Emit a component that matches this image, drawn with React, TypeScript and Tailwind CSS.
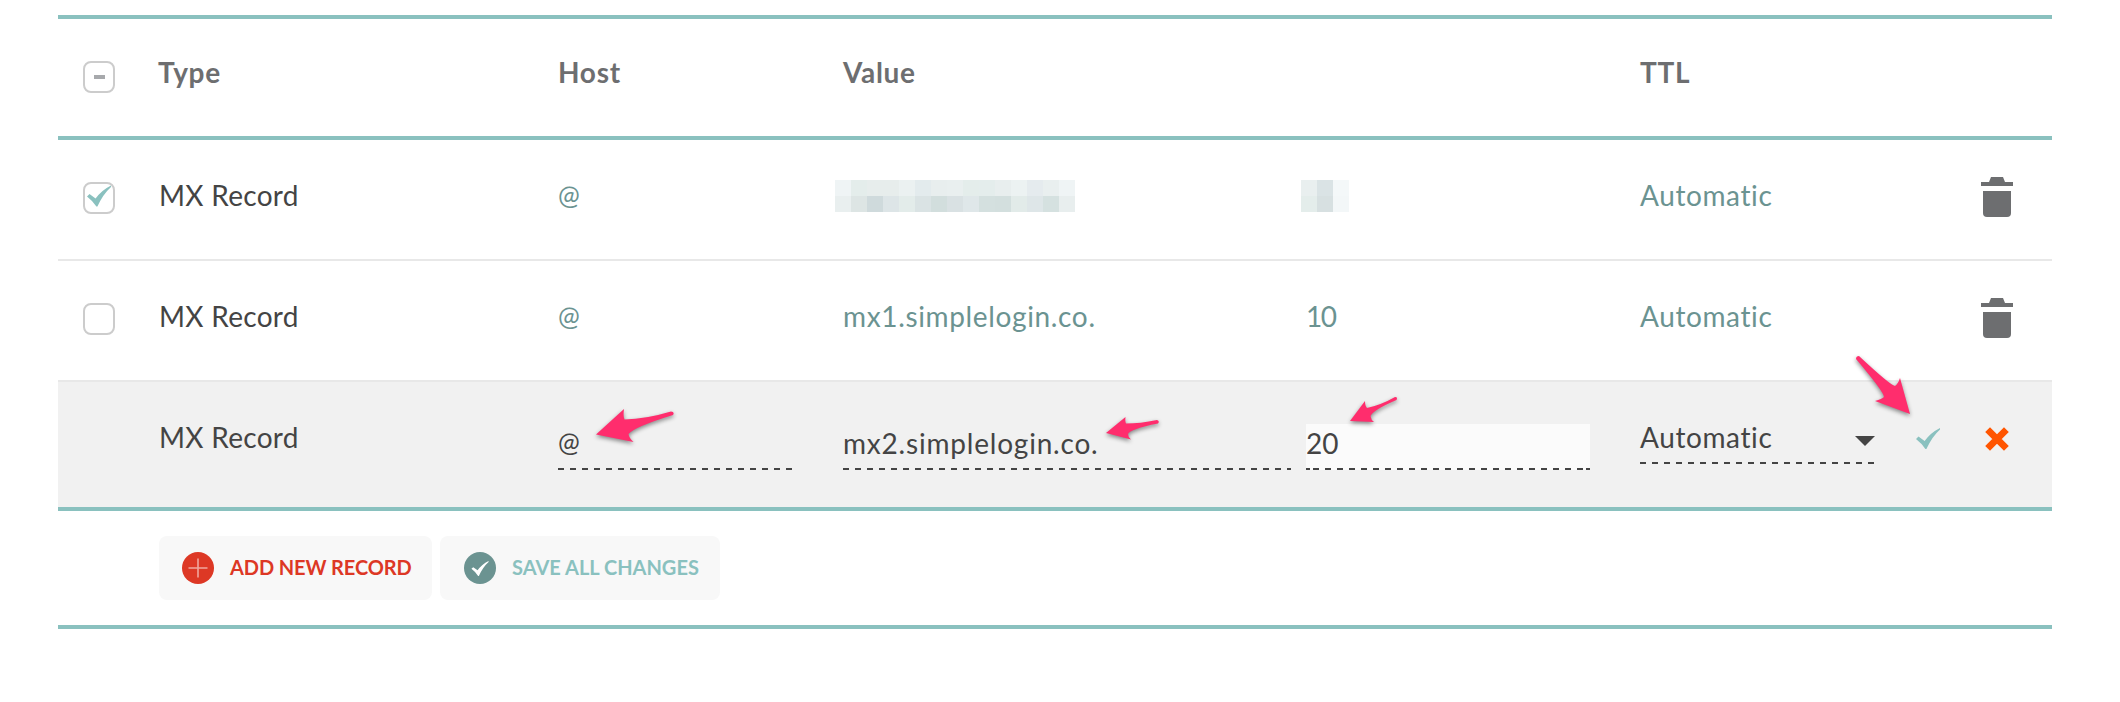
import React from "react";

const VALUE_PIXELS = [
  ["bg-[#eff4f5]", "bg-[#e4edeb]", "bg-[#e7edec]", "bg-[#e7edec]", "bg-[#ebf1f1]", "bg-[#e3ebed]", "bg-[#e8eeee]", "bg-[#e9efef]", "bg-[#e4edeb]", "bg-[#e4edec]", "bg-[#e8eeee]", "bg-[#ecf2f2]", "bg-[#e5ebee]", "bg-[#e9efef]", "bg-[#eff4f5]"],
  ["bg-[#e9efef]", "bg-[#dde5e4]", "bg-[#cfdadc]", "bg-[#dde5e7]", "bg-[#e3ecea]", "bg-[#dae3e4]", "bg-[#d2dedd]", "bg-[#d9e1e3]", "bg-[#dfe7e9]", "bg-[#d4e0df]", "bg-[#d3dfde]", "bg-[#e2ebe9]", "bg-[#dee6e8]", "bg-[#d5e1e0]", "bg-[#e8eeee]"],
];
const PRIORITY_PIXELS = [
  ["bg-[#e9efef]", "bg-[#dae3e5]", "bg-[#f4f8f9]"],
  ["bg-[#e4edeb]", "bg-[#d7e0e1]", "bg-[#f3f7f8]"],
];

function Redacted({ rows }: { rows: string[][] }) {
  return (
    <div className="pt-px">
      {rows.map((row, r) => (
        <div key={r} className="flex">
          {row.map((c, i) => (
            <div key={i} className={"size-4 " + c} />
          ))}
        </div>
      ))}
    </div>
  );
}

function Tick({ className }: { className?: string }) {
  return (
    <svg viewBox="0 0 24 21" className={className} fill="currentColor">
      <path d="M0 11 L2.5 8.6 L8.6 13 Q14.5 4.8 24 0 V1.4 Q16 8.6 10.4 21 H9.4 Q5.5 15.2 0 11 Z" />
    </svg>
  );
}

function Checkbox({ children }: { children?: React.ReactNode }) {
  return (
    <div className="flex size-8 items-center justify-center rounded-[8px] border-2 border-[#ccc] bg-white">{children}</div>
  );
}

function Trash() {
  return (
    <svg viewBox="0 0 32 40" className="h-10 w-8" fill="#6d6e70">
      <path d="M0 5 H8 L10 0 H22 L24 5 H32 V9 H0 Z" />
      <path d="M2 14 H30 V36 Q30 40 26 40 H6 Q2 40 2 36 Z" />
    </svg>
  );
}

function Arrow({ className, box, d }: { className: string; box: string; d: string }) {
  return (
    <svg viewBox={box} className={"absolute overflow-visible drop-shadow-[0_2px_2px_rgba(0,0,0,0.45)] " + className}>
      <path d={d} fill="#ff2d6d" />
    </svg>
  );
}

function Dashes() {
  return <div className="h-[2px] bg-[repeating-linear-gradient(90deg,#444_0_6px,transparent_6px_12px)]" />;
}

const GRID = "grid grid-cols-[101px_399px_285px_463px_334px_235px_177px]";

function RecordRow({ checked, value, priority }: { checked?: boolean; value: React.ReactNode; priority: React.ReactNode }) {
  return (
    <div className={GRID + " h-[121px] text-[#6b9391]"}>
      <div className="pt-[42px] pl-[25px]">
        <Checkbox>{checked && <Tick className="mr-px mb-1 h-[22px] w-6 text-[#8ac1bf]" />}</Checkbox>
      </div>
      <div className="pt-[37px] text-[#444]"><span className="tracking-[0.3px]">MX Record</span></div>
      <div className="pt-[36px]"><At /></div>
      {value}
      {priority}
      <div className="pt-[37px]"><span className="tracking-[0.6px]">Automatic</span></div>
      <div className="flex justify-end pt-[37px] pr-[39px]"><Trash /></div>
    </div>
  );
}

function At() {
  return <span className="inline-block text-[26px]">@</span>;
}

export default function App() {
  return (
    <div className="h-[702px] w-[2120px] overflow-hidden bg-white pt-[15px] pl-[58px] font-[Lato,sans-serif] text-[28px] leading-[36px] whitespace-nowrap">
      <div className="w-[1994px] border-y-4 border-[#8ac1bf]">
        <div className={GRID + " h-[117px] text-[28px] font-bold tracking-[0.7px] text-[#6d6e70]"}>
          <div className="pt-[42px] pl-[25px]">
            <Checkbox><div className="h-1 w-[11px] bg-[#a7a9ac]" /></Checkbox>
          </div>
          <div className="pt-[35px]"><span className="-ml-px">Type</span></div>
          <div className="pt-[35px]">Host</div>
          <div className="pt-[35px]">Value</div>
          <div />
          <div className="pt-[35px]">TTL</div>
        </div>
      </div>
      <div className="relative w-[1994px] border-b-4 border-[#8ac1bf]">
        <div className="h-[121px] border-b-2 border-[#e8e8e8]">
          <RecordRow
            checked
            value={<div className="-ml-2 pt-[39px]"><Redacted rows={VALUE_PIXELS} /></div>}
            priority={<div className="-ml-[5px] pt-[39px]"><Redacted rows={PRIORITY_PIXELS} /></div>}
          />
        </div>
        <div className="h-[121px] border-b-2 border-[#e8e8e8]">
          <RecordRow
            value={<div className="pt-[37px] tracking-[0.65px]">mx1.simplelogin.co.</div>}
            priority={<div className="pt-[37px] tracking-[-1.5px]">10</div>}
          />
        </div>
        <div className={GRID + " h-[125px] bg-[#f1f1f1] text-[#444]"}>
          <div />
          <div className="pt-[37px]"><span className="tracking-[0.3px]">MX Record</span></div>
          <div className="mr-[51px] flex h-[88px] flex-col justify-between pt-[42px]"><At /><Dashes /></div>
          <div className="mr-[15px] flex h-[88px] flex-col justify-between pt-[43px]"><span className="tracking-[0.8px]">mx2.simplelogin.co.</span><Dashes /></div>
          <div className="mt-[42px] mr-[50px] flex h-[46px] flex-col justify-between bg-[#fbfbfb] pt-px">
            <span>20</span>
            <div className="h-[2px] border-x-4 border-[#444] bg-[repeating-linear-gradient(90deg,transparent_0_3px,#444_3px_9px,transparent_9px_12px)] bg-origin-padding" />
          </div>
          <div className="flex h-[82px] flex-col justify-between pt-[37px]">
            <div className="flex justify-between">
              <span className="tracking-[0.6px]">Automatic</span>
              <svg viewBox="0 0 20 10" className="mt-[17px] h-[10px] w-5" fill="#444"><path d="M0 0H20L10 10Z" /></svg>
            </div>
            <Dashes />
          </div>
          <div className="flex items-start pt-[45px] pl-[41px]">
            <Tick className="mt-px h-[21px] w-6 text-[#8ac1bf]" />
            <svg viewBox="0 0 24 24" className="ml-[45px] size-6"><path d="M2.6 2.6L21.4 21.4M21.4 2.6L2.6 21.4" stroke="#ff5500" strokeWidth="6.8" /></svg>
          </div>
        </div>
        <Arrow className="top-[269px] left-[538px] h-[34px] w-[78px]" box="0 0 78 34" d="M0 25.5 L28 0 Q27 8 28.5 10.5 Q50 10 75 2.5 Q79 3 77 6 Q38 18 32.5 25 Q33 29 37.5 33 Z" />
        <Arrow className="top-[277px] left-[1048px] h-[23px] w-[53px]" box="0 0 53 23" d="M0 16 L19.5 0 Q19 5 20 6.5 Q34 6.5 51 3 Q54 4 52 6.5 Q24 12 22 17 Q22 20 25 22.5 Z" />
        <Arrow className="top-[257px] left-[1292px] h-[26px] w-[47px]" box="0 0 47 26" d="M0 24 L15 4 Q15 9 17 11 Q31 8 45 0 Q48 0 46.5 3 Q23 13 20.5 19 Q21 23 24 25 Z" />
        <Arrow className="top-[216px] left-[1798px] h-[58px] w-[54px]" box="0 0 54 58" d="M0 3 Q0 0 3 0 Q34 29 39 30 Q42 28 44 22 L54 58 L19 45 Q26 43 28 41 Q28 36 0 3 Z" />
      </div>
      <div className="flex h-[118px] w-[1994px] gap-2 border-b-4 border-[#8ac1bf] pt-[25px] pl-[101px] text-[20px] font-bold">
        <button className="flex h-16 w-[273px] items-center rounded-[8px] bg-[#f8f8f8] pl-[23px] text-[#dd3825]">
          <svg viewBox="0 0 32 32" className="mr-4 size-8"><circle cx="16" cy="16" r="16" fill="#dd3825" /><path d="M6.5 16H25.5M16 6.5V25.5" stroke="#f0a69d" strokeWidth="1.6" /></svg>
          <span className="-mt-0.5 tracking-[-0.1px]">ADD NEW RECORD</span>
        </button>
        <button className="flex h-16 w-[280px] items-center rounded-[8px] bg-[#f8f8f8] pl-6 text-[#8ac1bf]">
          <span className="mr-4 flex size-8 items-center justify-center rounded-full bg-[#6b9391]"><Tick className="h-[15px] w-[18px] text-white" /></span>
          <span className="-mt-0.5">SAVE ALL CHANGES</span>
        </button>
      </div>
    </div>
  );
}
